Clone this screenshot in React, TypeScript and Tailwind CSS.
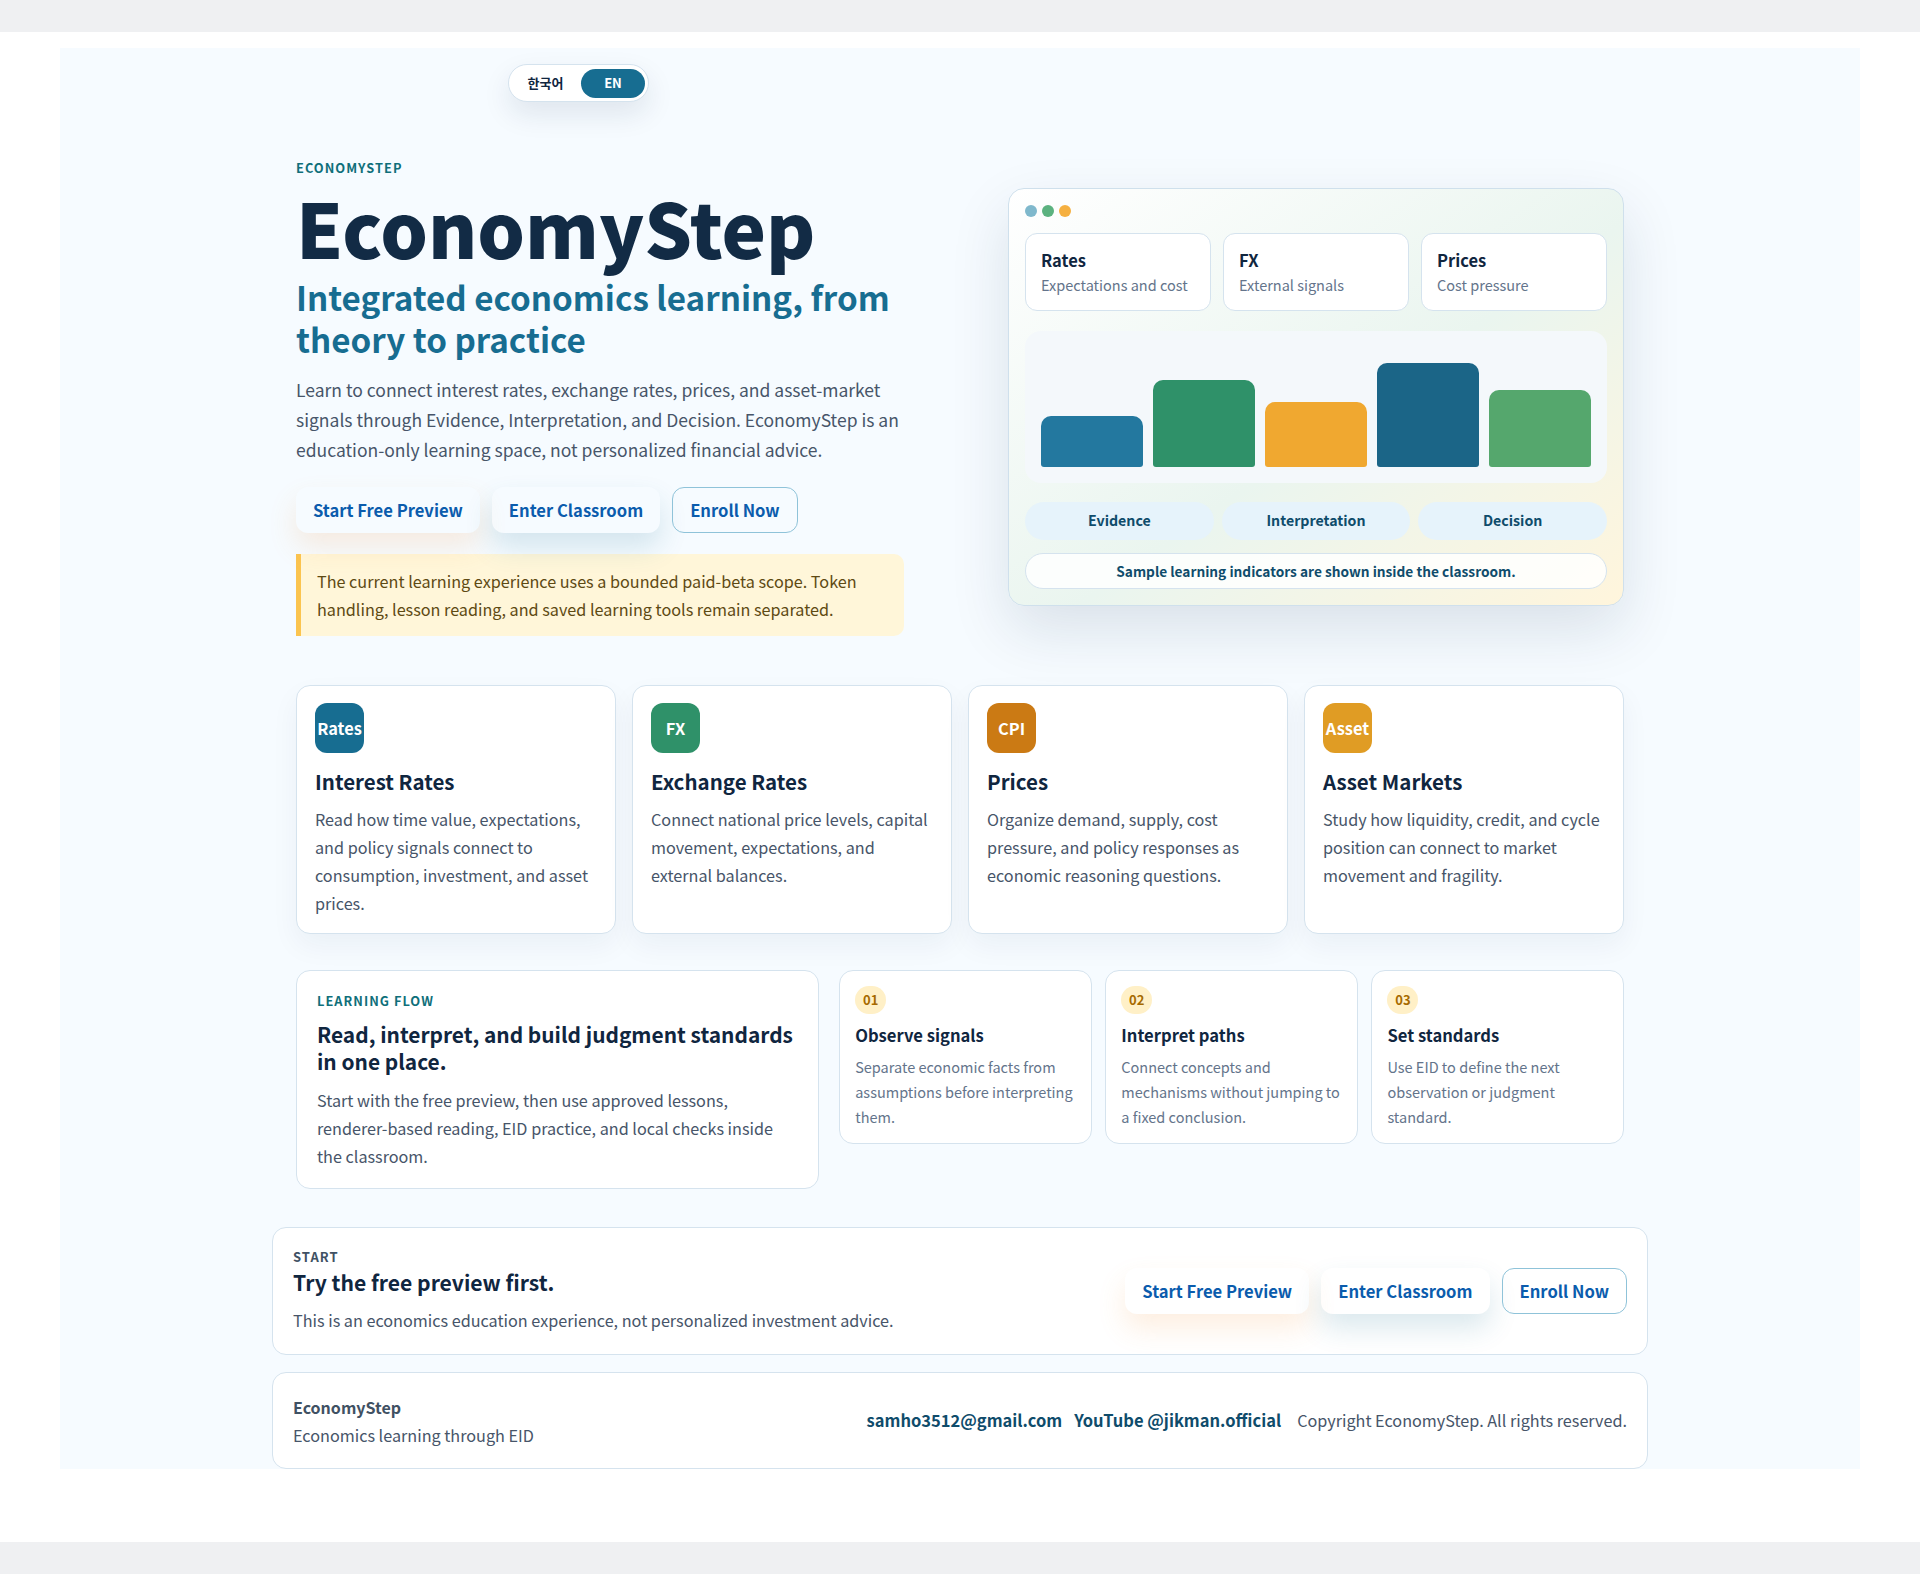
const TOPICS = [
  { badge: "Rates", color: "bg-[#176d91]", title: "Interest Rates", body: "Read how time value, expectations, and policy signals connect to consumption, investment, and asset prices." },
  { badge: "FX", color: "bg-[#2f9169]", title: "Exchange Rates", body: "Connect national price levels, capital movement, expectations, and external balances." },
  { badge: "CPI", color: "bg-[#cb7a14]", title: "Prices", body: "Organize demand, supply, cost pressure, and policy responses as economic reasoning questions." },
  { badge: "Asset", color: "bg-[#e09c24]", title: "Asset Markets", body: "Study how liquidity, credit, and cycle position can connect to market movement and fragility." },
];

const STEPS = [
  { n: "01", title: "Observe signals", body: "Separate economic facts from assumptions before interpreting them." },
  { n: "02", title: "Interpret paths", body: "Connect concepts and mechanisms without jumping to a fixed conclusion." },
  { n: "03", title: "Set standards", body: "Use EID to define the next observation or judgment standard." },
];

const MINI = [
  { title: "Rates", sub: "Expectations and cost" },
  { title: "FX", sub: "External signals" },
  { title: "Prices", sub: "Cost pressure" },
];

const BARS = [
  { h: "h-[51px]", color: "bg-[#23789f]" },
  { h: "h-[87px]", color: "bg-[#2f9169]" },
  { h: "h-[65px]", color: "bg-[#f0a830]" },
  { h: "h-[104px]", color: "bg-[#1b6587]" },
  { h: "h-[77px]", color: "bg-[#55a76d]" },
];

function Buttons() {
  return (
    <div className="flex gap-3">
      <a className="flex h-[46px] items-center rounded-xl px-[17px] text-[16.6px] font-bold text-[#0b5cad] shadow-[0_14px_28px_rgba(240,150,60,0.16)]">
        Start Free Preview
      </a>
      <a className="flex h-[46px] items-center rounded-xl px-[17px] text-[16.6px] font-bold text-[#0b5cad] shadow-[0_14px_28px_rgba(23,109,145,0.16)]">
        Enter Classroom
      </a>
      <a className="flex h-[46px] items-center rounded-xl border border-[#8fc3d9] px-[17px] text-[16.6px] font-bold text-[#0b5cad]">
        Enroll Now
      </a>
    </div>
  );
}

function HeroPanel() {
  return (
    <div className="flex h-[418px] w-[616px] flex-col rounded-2xl border border-[#cfe0ec] bg-[linear-gradient(145deg,#ffffff_0%,#eaf5ef_55%,#fff5dc_100%)] p-4 shadow-[0_24px_60px_rgba(18,42,76,0.12)]">
      <div className="flex h-[12px] gap-[5px]">
        <span className="h-3 w-3 rounded-full bg-[#7fb8cc]" />
        <span className="h-3 w-3 rounded-full bg-[#5bb27f]" />
        <span className="h-3 w-3 rounded-full bg-[#f5b041]" />
      </div>
      <div className="mt-[16px] grid grid-cols-3 gap-3">
        {MINI.map((m) => (
          <div key={m.title} className="flex h-[78px] flex-col justify-center rounded-xl border border-[#d5e3ee] bg-white px-[15px]">
            <div className="text-[16.5px] font-bold leading-[25px] text-[#10263f]">{m.title}</div>
            <div className="text-[14.5px] leading-[24px] text-[#64748b]">{m.sub}</div>
          </div>
        ))}
      </div>
      <div className="mt-[20px] flex h-[152px] items-end gap-[10px] rounded-2xl bg-[#f4f8fb] p-4">
        {BARS.map((b) => (
          <div key={b.h} className={`flex-1 rounded-t-[10px] rounded-b-[3px] ${b.h} ${b.color}`} />
        ))}
      </div>
      <div className="mt-[19px] grid grid-cols-3 gap-2">
        {["Evidence", "Interpretation", "Decision"].map((t) => (
          <div key={t} className="flex h-[38px] items-center justify-center rounded-full bg-[#e6f3fb] text-[14.2px] font-bold text-[#0f4c6b]">
            {t}
          </div>
        ))}
      </div>
      <div className="mt-[13px] flex h-[36px] items-center justify-center rounded-full border border-[#d5e3ee] bg-white/85 text-[13.7px] font-bold text-[#0f4c6b]">
        Sample learning indicators are shown inside the classroom.
      </div>
    </div>
  );
}

export default function App() {
  return (
    <div className="bg-[#eff0f2] py-8 font-['Noto_Sans_CJK_KR',sans-serif]">
      <div className="bg-white px-[60px] pt-4 pb-[73px]">
        <div className="h-[1421px] bg-[#f6fbff]">
          <div className="mx-auto w-[1376px]">
            <div className="pt-4 pl-[236px]">
              <div className="flex h-[38px] w-[141px] items-center justify-between rounded-full border border-[#d5e3ee] bg-white px-[3px] shadow-[0_12px_28px_rgba(18,42,76,0.1)]">
                <span className="flex-1 pr-[2px] text-center text-[13px] font-bold text-[#10263f]">한국어</span>
                <span className="flex h-[29px] w-[64px] items-center justify-center rounded-full bg-[#176d91] text-[13px] font-bold text-white">EN</span>
              </div>
            </div>

            <div className="px-6">
              <section className="mt-[56px] flex items-center justify-between">
                <div className="w-[608px]">
                  <div className="text-[12.8px] font-bold leading-[20px] tracking-[0.08em] text-[#0f6f7a]">ECONOMYSTEP</div>
                  <h1 className="mt-[7px] text-[75px] font-black leading-[84px] text-[#122b45]">EconomyStep</h1>
                  <h2 className="mt-[7px] text-[33.2px] font-bold leading-[42px] text-[#176d91]">
                    Integrated economics learning, from theory to practice
                  </h2>
                  <p className="mt-[15px] text-[17.5px] leading-[30px] text-[#475569]">
                    Learn to connect interest rates, exchange rates, prices, and asset-market signals through Evidence, Interpretation, and Decision. EconomyStep is an education-only learning space, not personalized financial advice.
                  </p>
                  <div className="mt-[22px]">
                    <Buttons />
                  </div>
                  <div className="mt-[21px] rounded-r-[10px] border-l-[5px] border-[#fbc44f] bg-[#fff6d9] py-[13px] pr-4 pl-4 text-[16.2px] leading-[28px] text-[#5e4a13]">
                    The current learning experience uses a bounded paid-beta scope. Token handling, lesson reading, and saved learning tools remain separated.
                  </div>
                </div>
                <HeroPanel />
              </section>

              <section className="mt-[49px] grid grid-cols-4 gap-4">
                {TOPICS.map((t) => (
                  <article key={t.title} className="h-[249px] rounded-[14px] border border-[#d5e3ee] bg-white px-[18px] pt-[17px] shadow-[0_12px_28px_rgba(18,42,76,0.05)]">
                    <div className={`flex h-[50px] w-[49px] items-center justify-center rounded-xl text-[16.4px] font-bold text-white ${t.color}`}>
                      {t.badge}
                    </div>
                    <h3 className="mt-[14px] text-[20.5px] font-bold leading-[28px] text-[#10263f]">{t.title}</h3>
                    <p className="mt-[10px] text-[16.2px] leading-[28px] text-[#475569]">{t.body}</p>
                  </article>
                ))}
              </section>

              <section className="mt-9 grid grid-cols-[1fr_1.5fr] items-start gap-5">
                <div className="h-[219px] rounded-[14px] border border-[#d5e3ee] bg-white px-5 pt-[20px]">
                  <div className="text-[12.8px] font-bold leading-[20px] tracking-[0.08em] text-[#0f6f7a]">LEARNING FLOW</div>
                  <h3 className="mt-[10px] text-[20.9px] font-bold leading-[27px] text-[#10263f]">
                    Read, interpret, and build judgment standards in one place.
                  </h3>
                  <p className="mt-[11px] text-[16.2px] leading-[28px] text-[#475569]">
                    Start with the free preview, then use approved lessons, renderer-based reading, EID practice, and local checks inside the classroom.
                  </p>
                </div>
                <div className="grid grid-cols-3 gap-[13.5px]">
                  {STEPS.map((s) => (
                    <div key={s.n} className="h-[174px] rounded-[14px] border border-[#d5e3ee] bg-white px-[15px] pt-[15px]">
                      <div className="flex h-[28px] w-[31px] items-center justify-center rounded-full bg-[#fff0c7] text-[13px] font-bold text-[#a66a00]">
                        {s.n}
                      </div>
                      <h4 className="mt-[9px] text-[16.6px] font-bold leading-[25px] text-[#10263f]">{s.title}</h4>
                      <p className="mt-[6px] text-[14.5px] leading-[25px] text-[#64748b]">{s.body}</p>
                    </div>
                  ))}
                </div>
              </section>
            </div>

            <section className="mt-[38px] flex h-[128px] items-center justify-between rounded-[14px] border border-[#d5e3ee] bg-white px-5">
              <div>
                <div className="text-[13px] font-bold leading-[18px] tracking-[0.08em] text-[#3f5163]">START</div>
                <h3 className="text-[21.1px] font-bold leading-[32px] text-[#10263f]">Try the free preview first.</h3>
                <p className="mt-[8px] text-[16.2px] leading-[28px] text-[#475569]">
                  This is an economics education experience, not personalized investment advice.
                </p>
              </div>
              <Buttons />
            </section>

            <footer className="mt-[17px] flex h-[97px] items-center justify-between rounded-[14px] border border-[#d5e3ee] bg-white px-5">
              <div>
                <div className="text-[16px] font-semibold leading-[28px] text-[#3f5163]">EconomyStep</div>
                <div className="text-[16.2px] leading-[28px] text-[#475569]">Economics learning through EID</div>
              </div>
              <div className="flex items-center text-[16.2px]">
                <a className="text-[16.5px] font-bold text-[#0f4c6b]">samho3512@gmail.com</a>
                <a className="ml-3 text-[16.5px] font-bold text-[#0f4c6b]">YouTube @jikman.official</a>
                <span className="ml-4 text-[#475569]">Copyright EconomyStep. All rights reserved.</span>
              </div>
            </footer>
          </div>
        </div>
      </div>
    </div>
  );
}
